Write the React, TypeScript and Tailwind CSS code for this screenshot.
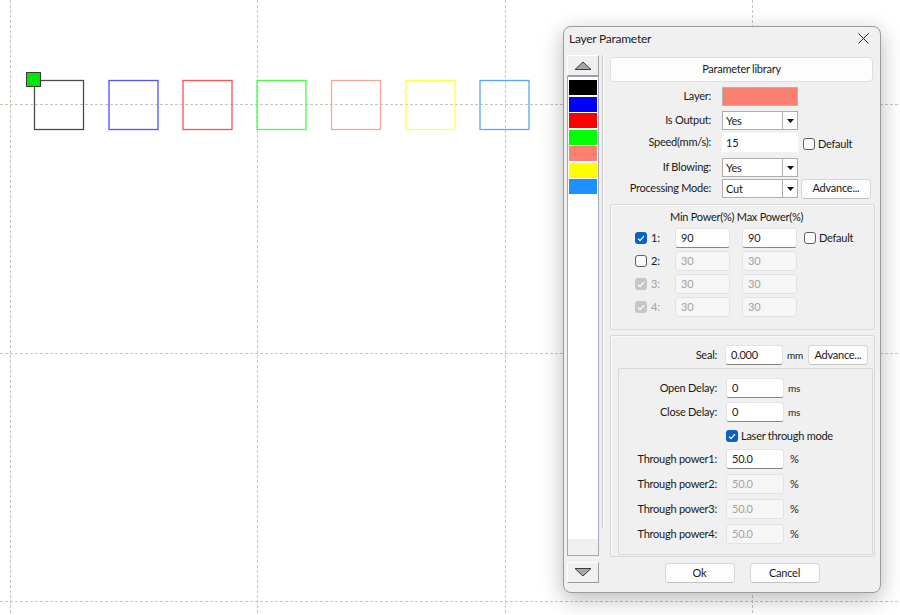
import React from "react";

const FONT = { fontFamily: 'Lato, "Noto Sans", sans-serif' };

const squares = [
  { x: 34, c: "#4a4a4a" },
  { x: 108.5, c: "#4f4fff" },
  { x: 182.5, c: "#ff4f4f" },
  { x: 256.5, c: "#45ff45" },
  { x: 331, c: "#ffa397" },
  { x: 405.5, c: "#ffff45" },
  { x: 479.5, c: "#5aa6ff" },
];

const swatches = ["#000000", "#0000ff", "#ff0000", "#00ff00", "#fa8072", "#ffff00", "#1e90ff"];

function Canvas() {
  return (
    <svg width="900" height="615" className="block">
      <rect width="900" height="615" fill="#ffffff" />
      {[10.5, 257.5, 505.5, 752.5].map((x) => (
        <line key={x} x1={x} x2={x} y1={0} y2={615} stroke="#c9c5ba" strokeDasharray="3 2" />
      ))}
      {[104.5, 353.5, 601.5].map((y) => (
        <line key={y} x1={0} x2={900} y1={y} y2={y} stroke="#c9c5ba" strokeDasharray="3 2" />
      ))}
      {squares.map((s) => (
        <rect key={s.x} x={s.x + 0.5} y={80.5} width={49} height={49} fill="none" stroke={s.c} strokeWidth="1.3" />
      ))}
      <rect x="26.5" y="72.5" width="14" height="14" fill="#00e600" stroke="#3a3a3a" strokeWidth="1" />
    </svg>
  );
}

function Check({ state }: { state: "on" | "off" | "dis" }) {
  if (state === "off") {
    return <span className="inline-block h-[12px] w-[12px] shrink-0 rounded-[3px] border border-[#5f5f5f] bg-[#fbfbfb]" />;
  }
  return (
    <span
      className={`flex h-[12px] w-[12px] shrink-0 items-center justify-center rounded-[3px] ${
        state === "on" ? "bg-[#0a62c0]" : "bg-[#c6c6c6]"
      }`}
    >
      <svg width="8" height="7" viewBox="0 0 8 7">
        <path d="M1 3.6 3 5.6 7 1.2" fill="none" stroke="#fff" strokeWidth="1.2" />
      </svg>
    </span>
  );
}

function Field({ value, w, disabled }: { value: string; w: string; disabled?: boolean }) {
  if (disabled) {
    return (
      <div className={`h-[20px] ${w} rounded-[3px] border border-[#e2e2e2] bg-[#f6f6f6] pl-[5px] leading-[18px] text-[#a3a3a3]`}>
        {value}
      </div>
    );
  }
  return (
    <div className={`h-[20px] ${w} rounded-[3px] border border-[#e4e4e4] border-b-[#868686] bg-white pl-[5px] leading-[18px]`}>
      {value}
    </div>
  );
}

function Combo({ value }: { value: string }) {
  return (
    <div className="flex h-[19px] w-[76px] border border-[#adadad] bg-white">
      <span className="flex-1 pl-[3px] leading-[17px]">{value}</span>
      <span className="flex w-[15px] items-center justify-center border-l border-[#adadad]">
        <svg width="7" height="4" viewBox="0 0 7 4">
          <path d="M0 0h7L3.5 4z" fill="#111" />
        </svg>
      </span>
    </div>
  );
}

function Btn({ label, w }: { label: string; w: string }) {
  return (
    <div className={`flex h-[20px] ${w} items-center justify-center rounded-[4px] border border-[#d6d6d6] border-b-[#c2c2c2] bg-[#fdfdfd]`}>
      {label}
    </div>
  );
}

function ArrowBtn({ up }: { up?: boolean }) {
  return (
    <div className="flex h-[21px] w-[32px] items-center justify-center border border-t-white border-l-white border-r-[#9a9a9a] border-b-[#9a9a9a] bg-[#f0f0f0]">
      <svg width="18" height="9" viewBox="0 0 18 9">
        <path d={up ? "M1 8.5 9 1l8 7.5z" : "M1 .5 9 8l8-7.5z"} fill="#a6a6a6" stroke="#3c3c3c" strokeWidth="1" />
      </svg>
    </div>
  );
}

function FormRow({ label, children, className }: { label: string; children: React.ReactNode; className: string }) {
  return (
    <div className={`flex h-[19px] items-center ${className}`}>
      <span className="w-[102px] whitespace-nowrap text-right">{label}</span>
      <div className="ml-[11px] flex items-center">{children}</div>
    </div>
  );
}

function PowerRow({ n, state, min, max, active }: { n: number; state: "on" | "off" | "dis"; min: string; max: string; active?: boolean }) {
  return (
    <div className="flex h-[20px] items-center pl-[24px]">
      <Check state={state} />
      <span className={`ml-[4px] w-[24px] ${state === "dis" ? "text-[#a3a3a3]" : ""}`}>{n}:</span>
      <Field value={min} w="w-[55px]" disabled={!active} />
      <div className="ml-[12px]">
        <Field value={max} w="w-[55px]" disabled={!active} />
      </div>
      {active && (
        <div className="ml-[7px] flex items-center">
          <Check state="off" />
          <span className="ml-[3px]">Default</span>
        </div>
      )}
    </div>
  );
}

function SubRow({ label, children, className }: { label: string; children: React.ReactNode; className: string }) {
  return (
    <div className={`flex h-[20px] items-center ${className}`}>
      <span className="w-[98px] whitespace-nowrap text-right">{label}</span>
      <div className="ml-[9px] flex items-center">{children}</div>
    </div>
  );
}

function LayerDialog() {
  return (
    <div
      className="absolute left-[563px] top-[26px] h-[567px] w-[318px] rounded-[8px] border border-[#9c9c9c] bg-[#f0f0f0] text-[11px] tracking-[-0.25px] text-[#1a1a1a] shadow-[0_6px_22px_rgba(0,0,0,0.28)]"
      style={FONT}
    >
      <div className="flex h-[23px] items-center justify-between pl-[5px] pr-[11px]">
        <span className="text-[12px] text-[#1c1c1c]">Layer Parameter</span>
        <svg width="11" height="11" viewBox="0 0 11 11">
          <path d="M.5.5l10 10M10.5.5l-10 10" stroke="#222" strokeWidth="1" />
        </svg>
      </div>
      <div className="flex">
        <div className="ml-[3px] mt-[5px] flex w-[32px] flex-col">
          <ArrowBtn up />
          <div className="flex h-[480px] flex-col border border-[#a4a6b8] bg-white">
            <div className="flex flex-1 flex-col gap-[1.5px] px-px pt-[3px]">
              {swatches.map((c) => (
                <div key={c} className="h-[15px]" style={{ background: c }} />
              ))}
            </div>
            <div className="h-[16px] bg-[#f0f0f0]" />
          </div>
          <div className="mt-[6px]">
            <ArrowBtn />
          </div>
        </div>
        <div className="ml-[3px] mt-[5px] h-[473px] w-[2px] border-l border-[#c6c6c6] bg-white" />
        <div className="ml-[5px] mt-[7px] w-[266px]">
          <div className="ml-px flex h-[25px] w-[263px] items-center justify-center rounded-[4px] border border-[#dedede] bg-[#fdfdfd]">
            Parameter library
          </div>
          <FormRow label="Layer:" className="mt-[5px]">
            <div className="h-[19px] w-[76px] border border-[#b4b4b4] bg-[#fa8072]" />
          </FormRow>
          <FormRow label="Is Output:" className="mt-[5px]">
            <Combo value="Yes" />
          </FormRow>
          <FormRow label="Speed(mm/s):" className="mt-[3px]">
            <div className="h-[19px] w-[76px] bg-white pl-[4px] leading-[19px]">15</div>
            <div className="ml-[5px] mt-[3px] flex items-center">
              <Check state="off" />
              <span className="ml-[3px]">Default</span>
            </div>
          </FormRow>
          <FormRow label="If Blowing:" className="mt-[6px]">
            <Combo value="Yes" />
          </FormRow>
          <FormRow label="Processing Mode:" className="mt-[2px]">
            <Combo value="Cut" />
            <div className="ml-[3px]">
              <Btn label="Advance..." w="w-[70px]" />
            </div>
          </FormRow>

          <div className="ml-px mt-[6px] h-[126px] w-[265px] rounded-[2px] border border-[#d8d8d8] shadow-[inset_1px_1px_0_#fafafa]">
            <div className="mt-[4px] h-[16px] whitespace-nowrap pl-[59px] leading-[16px]">Min Power(%) Max Power(%)</div>
            <div className="mt-[3px] flex flex-col gap-[3px]">
              <PowerRow n={1} state="on" min="90" max="90" active />
              <PowerRow n={2} state="off" min="30" max="30" />
              <PowerRow n={3} state="dis" min="30" max="30" />
              <PowerRow n={4} state="dis" min="30" max="30" />
            </div>
          </div>

          <div className="ml-px mt-[5px] h-[222px] w-[265px] rounded-[2px] border border-[#d8d8d8] shadow-[inset_1px_1px_0_#fafafa]">
            <div className="mt-[9px] flex h-[20px] items-center">
              <span className="w-[106px] text-right">Seal:</span>
              <div className="ml-[8px]">
                <Field value="0.000" w="w-[58px]" />
              </div>
              <span className="ml-[4px] text-[10px]">mm</span>
              <div className="ml-[5px]">
                <Btn label="Advance..." w="w-[60px]" />
              </div>
            </div>
            <div className="ml-[7px] mr-px mt-[3px] h-[187px] rounded-[2px] border border-[#d8d8d8]">
              <SubRow label="Open Delay:" className="mt-[9px]">
                <Field value="0" w="w-[58px]" />
                <span className="ml-[4px] text-[10px]">ms</span>
              </SubRow>
              <SubRow label="Close Delay:" className="mt-[4px]">
                <Field value="0" w="w-[58px]" />
                <span className="ml-[4px] text-[10px]">ms</span>
              </SubRow>
              <div className="mt-[6px] flex h-[16px] items-center pl-[107px]">
                <Check state="on" />
                <span className="ml-[3px]">Laser through mode</span>
              </div>
              <div className="mt-[5px] flex flex-col gap-[5px]">
                {["1", "2", "3", "4"].map((n) => (
                  <SubRow key={n} label={`Through power${n}:`} className="">
                    <Field value="50.0" w="w-[58px]" disabled={n !== "1"} />
                    <span className="ml-[6px]">%</span>
                  </SubRow>
                ))}
              </div>
            </div>
          </div>

          <div className="mt-[6px] flex justify-center gap-[15px]">
            <Btn label="Ok" w="w-[70px]" />
            <Btn label="Cancel" w="w-[70px]" />
          </div>
        </div>
      </div>
    </div>
  );
}

export default function App() {
  return (
    <div className="relative h-[615px] w-[900px] overflow-hidden bg-white">
      <Canvas />
      <LayerDialog />
    </div>
  );
}
